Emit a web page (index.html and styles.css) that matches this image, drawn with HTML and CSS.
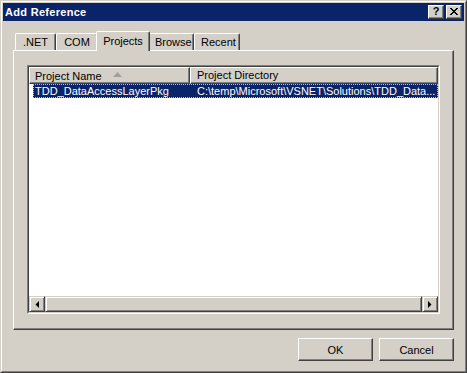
FILE: index.html
```html
<!DOCTYPE html>
<html lang="en">

<head>
    <meta charset="UTF-8">
    <title>Add Reference</title>
    <link rel="stylesheet" href="styles.css">
</head>

<body>

    <div class="window">
        <div class="frame">
            <div class="caption">
                <span class="caption-title">Add Reference</span>
                <div class="caption-buttons">
                    <div class="cap-btn help">?</div>
                    <div class="cap-btn close">
                        <svg width="8" height="7" viewBox="0 0 8 7">
                            <path d="M0 0h2v1h1v1h2v-1h1v-1h2v1h-1v1h-1v1h-1v1h1v1h1v1h1v1h-2v-1h-1v-1h-2v1h-1v1h-2v-1h1v-1h1v-1h1v-1h-1v-1h-1v-1h-1z" fill="#000"/>
                        </svg>
                    </div>
                </div>
            </div>

            <div class="content">
                <div class="tabs">
                    <div class="tab">.NET</div>
                    <div class="tab">COM</div>
                    <div class="tab active">Projects</div>
                    <div class="tab">Browse</div>
                    <div class="tab">Recent</div>
                </div>

                <div class="panel">
                    <div class="list">
                        <div class="list-inner">
                            <div class="list-header">
                                <div class="col-head col-name">
                                    Project Name
                                    <svg class="sort-arrow" width="9" height="5" viewBox="0 0 9 5">
                                        <polygon points="4.5,0 9,5 0,5" fill="#a0a0a0"/>
                                    </svg>
                                </div>
                                <div class="col-head col-dir">Project Directory</div>
                            </div>

                            <div class="list-body">
                                <div class="row selected">
                                    <span class="cell-name">TDD_DataAccessLayerPkg</span>
                                    <span class="cell-dir">C:\temp\Microsoft\VSNET\Solutions\TDD_Data...</span>
                                </div>
                            </div>

                            <div class="hscroll">
                                <div class="sb-btn">
                                    <svg width="4" height="7" viewBox="0 0 4 7"><polygon points="4,0 4,7 0.5,3.5" fill="#000"/></svg>
                                </div>
                                <div class="sb-thumb"></div>
                                <div class="sb-btn">
                                    <svg width="4" height="7" viewBox="0 0 4 7"><polygon points="0,0 0,7 3.5,3.5" fill="#000"/></svg>
                                </div>
                            </div>
                        </div>
                    </div>
                </div>

                <div class="footer">
                    <div class="btn">OK</div>
                    <div class="btn">Cancel</div>
                </div>
            </div>
        </div>
    </div>

</body>

</html>
```

FILE: styles.css
```css
body {
    margin: 0;
    font-family: "Liberation Sans", Arial, sans-serif;
    font-size: 11px;
    color: #000;
    background-color: #d4d0c8;
}

.window {
    width: 467px;
    height: 373px;
    box-sizing: border-box;
    border: 1px solid;
    border-color: #d4d0c8 #404040 #404040 #d4d0c8;
    background-color: #d4d0c8;
}

.frame {
    height: 100%;
    box-sizing: border-box;
    border: 1px solid;
    border-color: #fff #808080 #808080 #fff;
    padding: 1px;
    display: flex;
    flex-direction: column;
}

/* title bar */
.caption {
    height: 18px;
    flex-shrink: 0;
    background-color: #0a246a;
    display: flex;
    align-items: center;
    justify-content: space-between;
    padding: 0 2px 0 2px;
}

.caption-title {
    color: #fff;
    font-weight: bold;
    font-size: 11px;
    letter-spacing: 0.3px;
}

.caption-buttons {
    display: flex;
    gap: 2px;
}

.cap-btn {
    width: 16px;
    height: 14px;
    box-sizing: border-box;
    background-color: #d4d0c8;
    border: 1px solid;
    border-color: #fff #404040 #404040 #fff;
    box-shadow: inset -1px -1px #808080;
    display: flex;
    align-items: center;
    justify-content: center;
}

.cap-btn.help {
    font-weight: bold;
    font-size: 11px;
    line-height: 11px;
    padding-bottom: 1px;
}

.cap-btn.close svg {
    margin-top: -1px;
}

.content {
    flex: 1;
    display: flex;
    flex-direction: column;
    padding: 10px 10px 0 10px;
}

/* tabs */
.tabs {
    height: 19px;
    display: flex;
    align-items: flex-end;
    padding-left: 2px;
}

.tab {
    height: 17px;
    box-sizing: border-box;
    padding: 2px 6px 0 6px;
    border: 1px solid;
    border-bottom: none;
    border-color: #fff #404040 #fff #fff;
    border-radius: 2px 2px 0 0;
    box-shadow: inset -1px 0 #808080;
    background-color: #d4d0c8;
    text-align: center;
}

.tab:nth-child(1) { width: 41px; }
.tab:nth-child(2) { width: 42px; }
.tab:nth-child(4) { width: 46px; }
.tab:nth-child(5) { width: 46px; }

.tab.active {
    width: 54px;
    height: 20px;
    margin: 0 -2px -1px -2px;
    padding-top: 3px;
    position: relative;
    z-index: 1;
}

.panel {
    height: 280px;
    box-sizing: border-box;
    border: 1px solid;
    border-color: #fff #404040 #404040 #fff;
    box-shadow: inset -1px -1px #808080;
    padding: 14px 0 0 13px;
}

/* list view */
.list {
    width: 413px;
    height: 249px;
    box-sizing: border-box;
    border: 1px solid;
    border-color: #808080 #fff #fff #808080;
}

.list-inner {
    height: 100%;
    box-sizing: border-box;
    border: 1px solid;
    border-color: #404040 #d4d0c8 #d4d0c8 #404040;
    background-color: #fff;
    display: flex;
    flex-direction: column;
}

.list-header {
    height: 17px;
    display: flex;
    flex-shrink: 0;
}

.col-head {
    box-sizing: border-box;
    height: 17px;
    border: 1px solid;
    border-color: #fff #404040 #404040 #fff;
    box-shadow: inset -1px -1px #808080;
    background-color: #d4d0c8;
    padding: 1px 0 0 5px;
    white-space: nowrap;
}

.col-name {
    width: 161px;
    display: flex;
    align-items: center;
    padding-top: 0;
}

.sort-arrow {
    margin-left: 11px;
    margin-top: -2px;
}

.col-dir {
    flex: 1;
    padding-left: 6px;
}

.list-body {
    flex: 1;
    padding-top: 0;
}

.row {
    height: 14px;
    line-height: 14px;
    margin-left: 4px;
    display: flex;
    white-space: nowrap;
}

.row.selected {
    background-color: #0a246a;
    color: #fff;
    outline: 1px dotted #d8c070;
    outline-offset: -1px;
}

.cell-name {
    width: 157px;
    padding-left: 2px;
    box-sizing: border-box;
}

.cell-dir {
    padding-left: 7px;
}

/* horizontal scroll bar */
.hscroll {
    height: 16px;
    display: flex;
    flex-shrink: 0;
    background-color: #d4d0c8;
}

.sb-btn,
.sb-thumb {
    height: 16px;
    box-sizing: border-box;
    border: 1px solid;
    border-color: #d4d0c8 #404040 #404040 #d4d0c8;
    box-shadow: inset 1px 1px #fff, inset -1px -1px #808080;
    background-color: #d4d0c8;
}

.sb-btn {
    width: 16px;
    display: flex;
    align-items: center;
    justify-content: center;
}

.sb-thumb {
    flex: 1;
}

/* dialog buttons */
.footer {
    display: flex;
    justify-content: flex-end;
    gap: 6px;
    margin-top: 8px;
}

.btn {
    width: 75px;
    height: 23px;
    box-sizing: border-box;
    border: 1px solid;
    border-color: #fff #404040 #404040 #fff;
    box-shadow: inset -1px -1px #808080;
    background-color: #d4d0c8;
    display: flex;
    align-items: center;
    justify-content: center;
}
```
